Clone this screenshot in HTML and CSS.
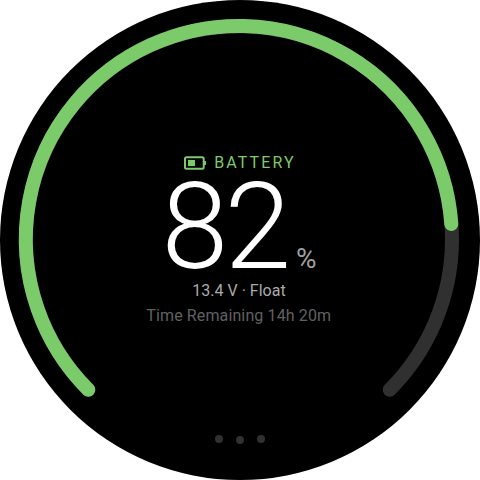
FILE: index.html
```html
<!DOCTYPE html>
<html lang="en">
<head>
<meta charset="utf-8">
<title>Battery</title>
<link rel="stylesheet" href="styles.css">
</head>
<body>
<main class="dial">
  <svg class="gauge" viewBox="0 0 480 480" aria-hidden="true">
    <path class="track" d="M88.3 389.7 A213 213 0 1 1 389.7 389.7"/>
    <path class="level" d="M88.3 389.7 A213 213 0 1 1 451.3 224"/>
  </svg>
  <section class="readout">
    <div class="label">
      <svg class="battery" viewBox="0 0 22 14" aria-hidden="true">
        <rect class="case" x="1" y="1.3" width="18.7" height="11.4" rx="1.5"/>
        <rect class="cell" x="4" y="4" width="7" height="6"/>
        <rect class="cell" x="20" y="5" width="2" height="4" rx="0.5"/>
      </svg>
      <span>BATTERY</span>
    </div>
    <div class="value"><span class="number">82</span><span class="unit">%</span></div>
    <div class="status">13.4 V · Float</div>
    <div class="remaining">Time Remaining 14h 20m</div>
  </section>
  <nav class="pages"><i></i><i class="current"></i><i></i></nav>
</main>
</body>
</html>
```

FILE: styles.css
```css
body { margin: 0; background: #fff; }
.dial {
  position: relative;
  box-sizing: border-box;
  width: 480px;
  height: 480px;
  padding-top: 152px;
  border-radius: 50%;
  background: #000;
  overflow: hidden;
  font-family: Roboto, sans-serif;
}
.gauge { position: absolute; inset: 0; }
.track, .level { fill: none; stroke-width: 14; stroke-linecap: round; }
.track { stroke: #303030; }
.level { stroke: #7ccb6b; }
.readout { display: flex; flex-direction: column; align-items: center; }
.label {
  display: flex;
  align-items: center;
  gap: 8px;
  height: 20px;
  line-height: 18px;
  color: #7ccb6b;
  font-size: 16px;
  letter-spacing: 2.1px;
}
.label span { margin-top: 2px; }
.battery { width: 22px; height: 14px; margin-top: 2px; }
.case { fill: none; stroke: currentColor; stroke-width: 2; }
.cell { fill: currentColor; }
.value {
  display: flex;
  align-items: baseline;
  height: 106px;
  margin-right: 2px;
  line-height: 110px;
  color: #fff;
}
.number { font-size: 120px; font-weight: 300; letter-spacing: -3.5px; }
.unit { margin-left: 8.5px; font-size: 28px; color: #a0a0a0; }
.status {
  height: 25px;
  margin-right: 2px;
  line-height: 25px;
  font-size: 16px;
  color: #aaa;
}
.remaining {
  height: 25px;
  margin-right: 2.5px;
  line-height: 25px;
  font-size: 16px;
  letter-spacing: 0.12px;
  color: #606060;
}
.pages { position: absolute; left: 0; right: 0; top: 435px; display: flex; justify-content: center; gap: 13px; }
.pages i { width: 8px; height: 8px; border-radius: 50%; background: #303030; }
.pages .current { margin-top: 1px; }
```
